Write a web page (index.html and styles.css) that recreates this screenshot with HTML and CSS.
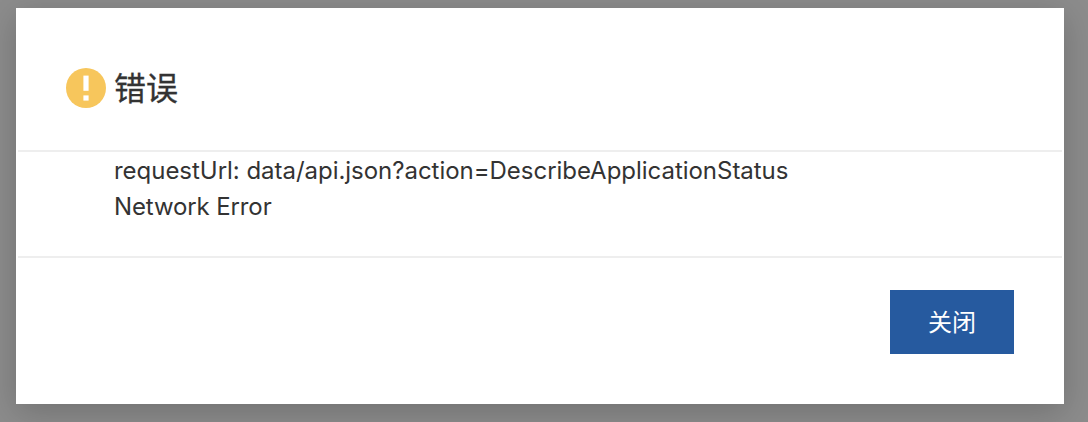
FILE: index.html
```html
<!DOCTYPE html>
<html lang="zh-CN">
<head>
    <meta charset="UTF-8">
    <meta name="viewport" content="width=device-width, initial-scale=1.0">
    <title>错误</title>
    <link rel="stylesheet" href="styles.css">
</head>
<body>
    <div class="dialog" role="alertdialog">
        <div class="dialog-header">
            <svg class="warning-icon" viewBox="0 0 40 40">
                <circle cx="20" cy="20" r="20" fill="#f7c65c"/>
                <rect x="17.4" y="7.6" width="5.2" height="15.2" fill="#fff"/>
                <rect x="17.4" y="27.4" width="5.2" height="5.2" fill="#fff"/>
            </svg>
            <h1 class="dialog-title">错误</h1>
        </div>

        <div class="dialog-body">
            <p class="request-url">requestUrl: data/api.json?action=DescribeApplicationStatus</p>
            <p class="error-message">Network Error</p>
        </div>

        <div class="dialog-footer">
            <button class="close-button">关闭</button>
        </div>
    </div>
</body>
</html>
```

FILE: styles.css
```css
body {
    margin: 0;
    height: 422px;
    box-sizing: border-box;
    padding: 8px 24px 18px 16px;
    background: #8c8c8c;
    font-family: Inter, "Noto Sans CJK SC", sans-serif;
    color: #333;
    overflow: hidden;
}

.dialog {
    box-sizing: border-box;
    height: 396px;
    padding: 0 2px;
    background: #fff;
    box-shadow: 0 8px 32px rgba(0, 0, 0, 0.2);
}

.dialog-header {
    display: flex;
    align-items: center;
    box-sizing: border-box;
    height: 144px;
    padding: 18px 48px 0;
    border-bottom: 2px solid #eee;
}

.warning-icon {
    width: 40px;
    height: 40px;
    margin-right: 8px;
}

.dialog-title {
    margin: 0;
    padding-top: 2px;
    font-size: 32px;
    line-height: 40px;
    font-weight: 400;
    -webkit-text-stroke: 0.3px #333;
}

.dialog-body {
    box-sizing: border-box;
    height: 106px;
    padding: 1px 0 0 96px;
    border-bottom: 2px solid #eee;
}

.dialog-body p {
    margin: 0;
    font-size: 24px;
    line-height: 36px;
    letter-spacing: -0.03px;
}

.dialog-body .error-message {
    letter-spacing: -0.12px;
}

.dialog-footer {
    display: flex;
    justify-content: flex-end;
    padding: 32px 48px 0;
}

.close-button {
    width: 124px;
    height: 64px;
    padding: 0 0 4px;
    border: none;
    background: #265a9f;
    color: #fff;
    font-family: inherit;
    font-size: 24px;
    cursor: pointer;
}
```
